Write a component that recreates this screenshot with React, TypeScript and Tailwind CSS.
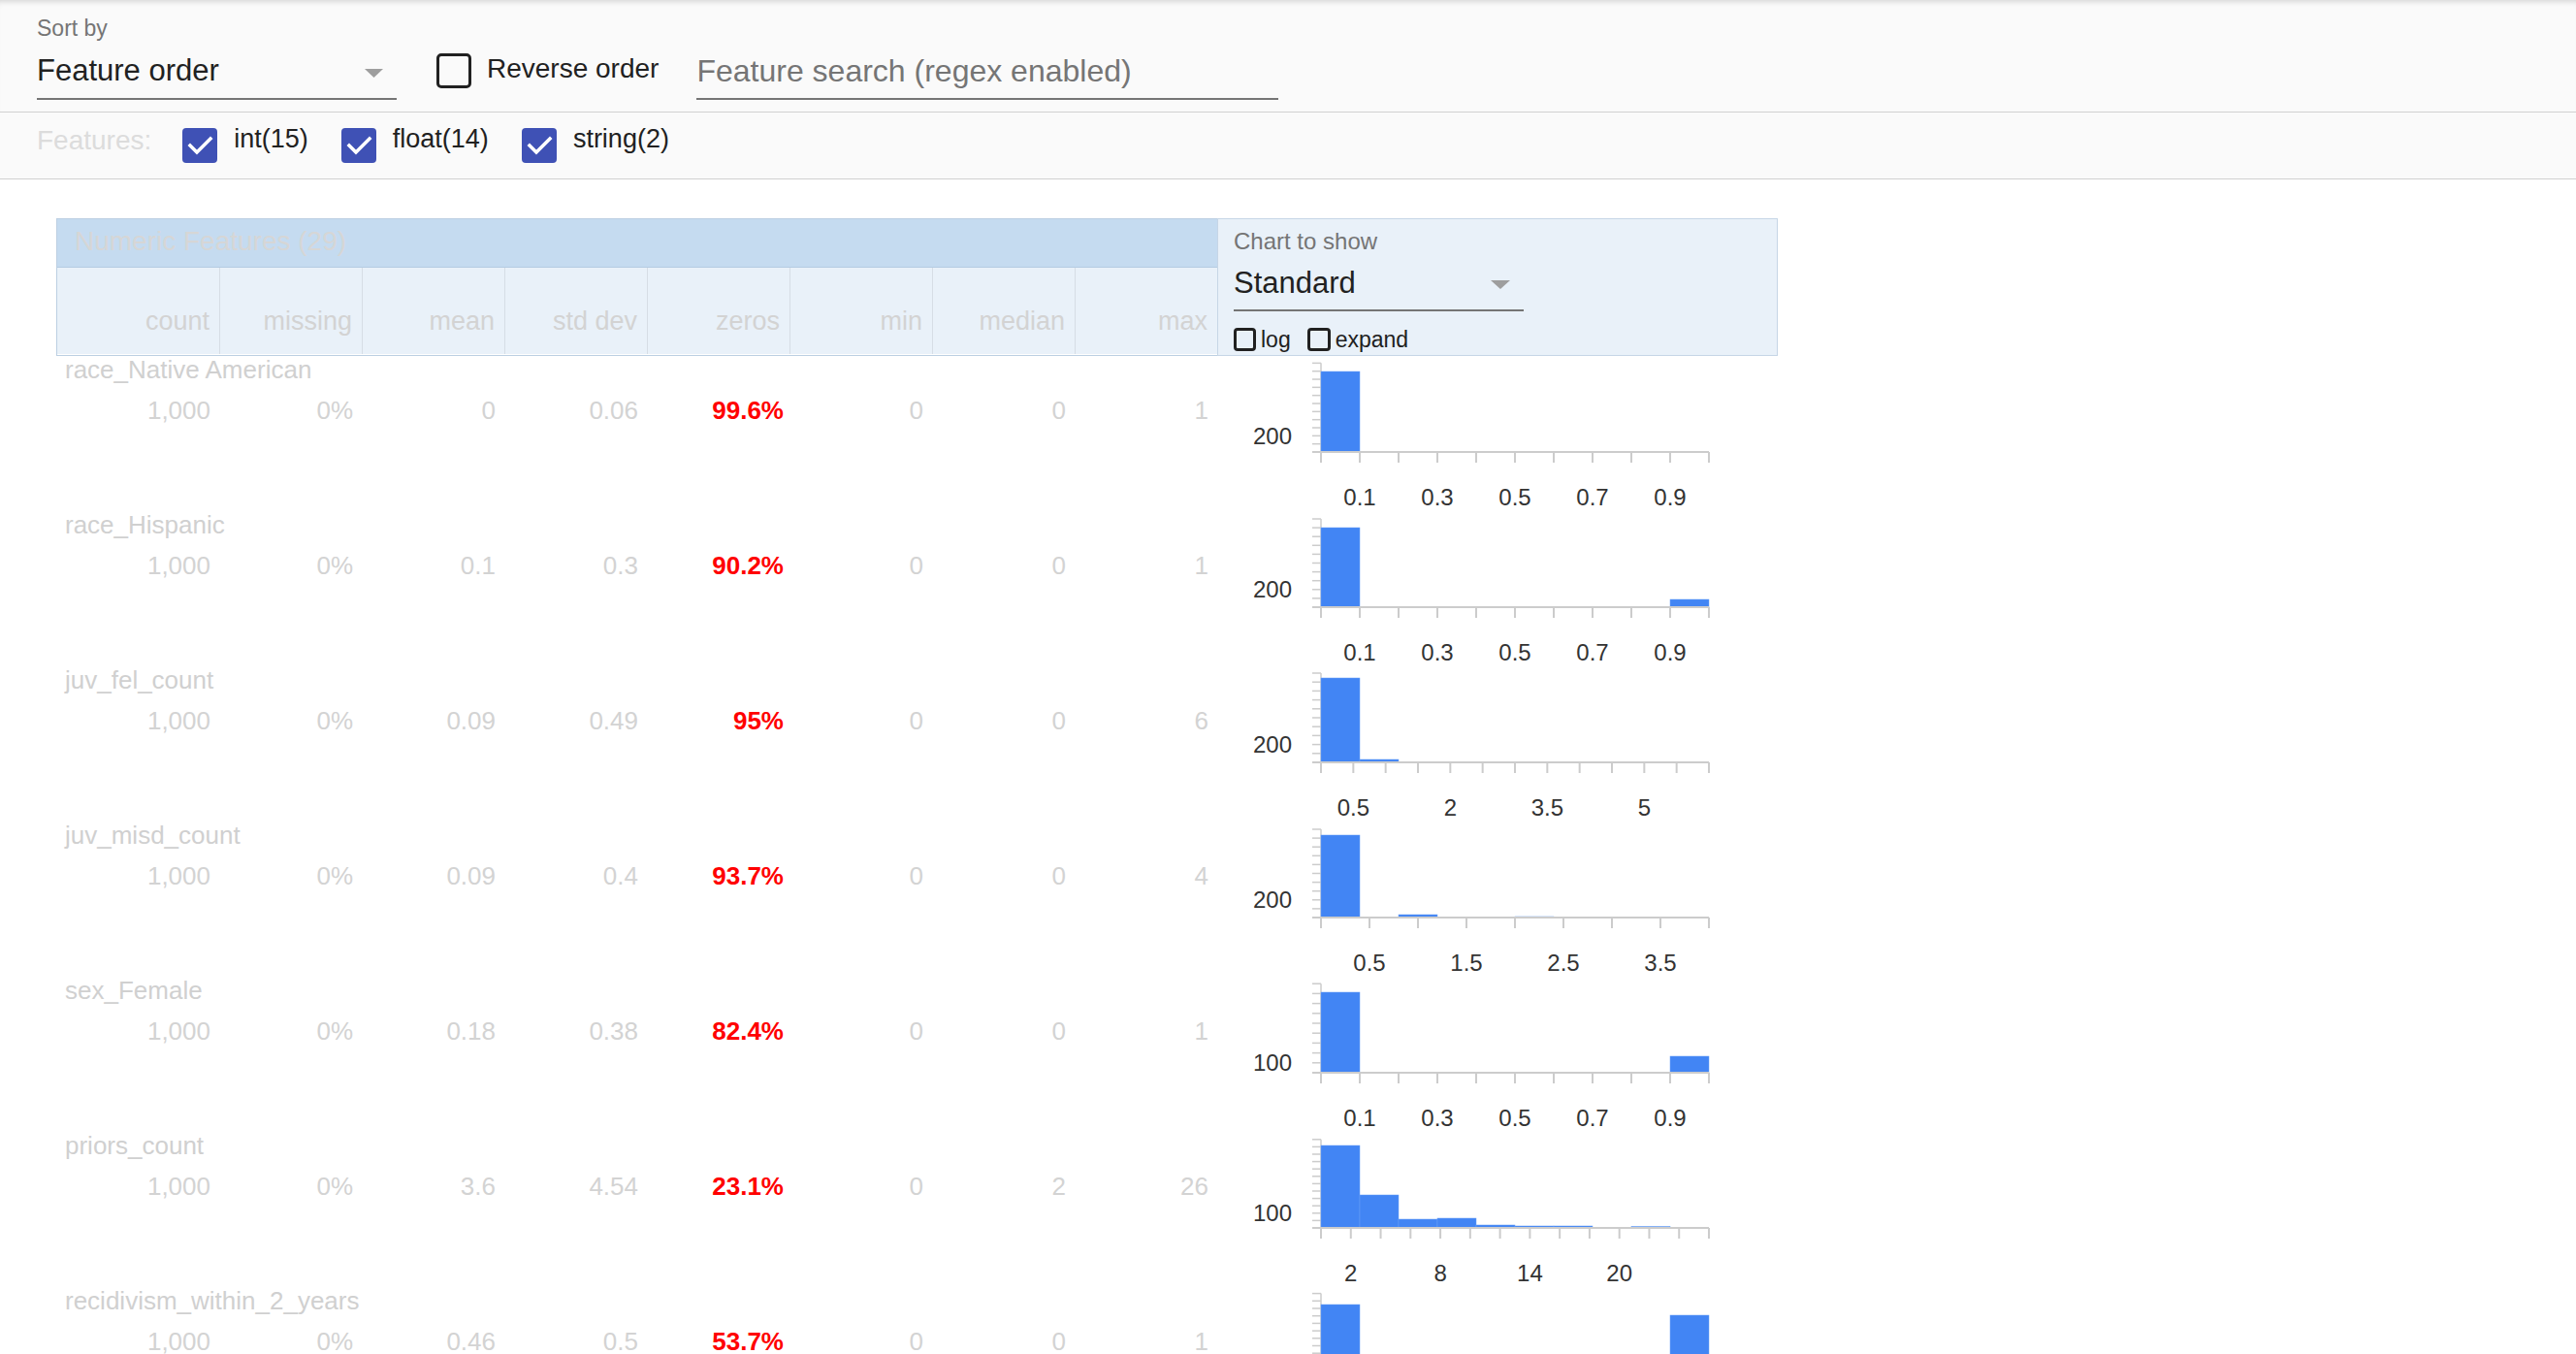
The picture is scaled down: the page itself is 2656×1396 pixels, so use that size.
const font = "font-['Liberation_Sans',Arial,sans-serif]";

type Chart = {
  n: number;
  s: number;
  yLabel: string;
  yk: number;
  bars: number[];
  xt: number;
  xl: [number, string][];
};

type Row = { name: string; vals: string[]; chart: Chart };

const tenths: [number, string][] = [
  [1, "0.1"],
  [3, "0.3"],
  [5, "0.5"],
  [7, "0.7"],
  [9, "0.9"],
];

const rows: Row[] = [
  {
    name: "race_Native American",
    vals: ["1,000", "0%", "0", "0.06", "99.6%", "0", "0", "1"],
    chart: { n: 11, s: 8.33, yLabel: "200", yk: 2, bars: [83, 0, 0, 0, 0, 0, 0, 0, 0, 0], xt: 10, xl: tenths },
  },
  {
    name: "race_Hispanic",
    vals: ["1,000", "0%", "0.1", "0.3", "90.2%", "0", "0", "1"],
    chart: { n: 10, s: 9.1, yLabel: "200", yk: 2, bars: [82, 0, 0, 0, 0, 0, 0, 0, 0, 8], xt: 10, xl: tenths },
  },
  {
    name: "juv_fel_count",
    vals: ["1,000", "0%", "0.09", "0.49", "95%", "0", "0", "6"],
    chart: {
      n: 10,
      s: 9.2,
      yLabel: "200",
      yk: 2,
      bars: [87, 3, 0, 0, 0, 0, 0, 0, 0, 0],
      xt: 12,
      xl: [
        [1, "0.5"],
        [4, "2"],
        [7, "3.5"],
        [10, "5"],
      ],
    },
  },
  {
    name: "juv_misd_count",
    vals: ["1,000", "0%", "0.09", "0.4", "93.7%", "0", "0", "4"],
    chart: {
      n: 10,
      s: 9.1,
      yLabel: "200",
      yk: 2,
      bars: [85, 0, 3, 0, 0, 1, 0, 0, 0, 0],
      xt: 8,
      xl: [
        [1, "0.5"],
        [3, "1.5"],
        [5, "2.5"],
        [7, "3.5"],
      ],
    },
  },
  {
    name: "sex_Female",
    vals: ["1,000", "0%", "0.18", "0.38", "82.4%", "0", "0", "1"],
    chart: { n: 9, s: 10.2, yLabel: "100", yk: 1, bars: [83, 0, 0, 0, 0, 0, 0, 0, 0, 17], xt: 10, xl: tenths },
  },
  {
    name: "priors_count",
    vals: ["1,000", "0%", "3.6", "4.54", "23.1%", "0", "2", "26"],
    chart: {
      n: 12,
      s: 7.6,
      yLabel: "100",
      yk: 2,
      bars: [85, 34, 9, 10, 3, 2, 2, 0, 1.5, 0],
      xt: 13,
      xl: [
        [1, "2"],
        [4, "8"],
        [7, "14"],
        [10, "20"],
      ],
    },
  },
  {
    name: "recidivism_within_2_years",
    vals: ["1,000", "0%", "0.46", "0.5", "53.7%", "0", "0", "1"],
    chart: { n: 12, s: 7.7, yLabel: "100", yk: 2, bars: [81, 0, 0, 0, 0, 0, 0, 0, 0, 70], xt: 10, xl: tenths },
  },
];

const headers = ["count", "missing", "mean", "std dev", "zeros", "min", "median", "max"];

const Check = () => (
  <svg width="30" height="30" viewBox="0 0 30 30" fill="none">
    <path d="M5 15 L12 22 L26 8" stroke="white" strokeWidth="3.5" strokeLinecap="square" />
  </svg>
);

function Histogram({ c }: { c: Chart }) {
  const ax = 82;
  const ay = 99;
  const w = 400;
  const top = ay - c.n * c.s;
  const step = w / c.xt;
  return (
    <svg width={500} height={160} className="block overflow-visible">
      {Array.from({ length: c.n + 1 }, (_, k) => (
        <line key={k} x1={73} x2={ax} y1={ay - k * c.s} y2={ay - k * c.s} stroke="#cccccc" strokeWidth={1.5} />
      ))}
      <line x1={ax} x2={ax} y1={top} y2={ay} stroke="#cccccc" strokeWidth={1.5} />
      {c.bars.map((h, i) =>
        h > 0 ? <rect key={i} x={ax + 40 * i} y={ay - h} width={40} height={h} fill="#4285f4" stroke="#6aa0f7" strokeWidth={0.5} /> : null
      )}
      <line x1={73} x2={ax + w} y1={ay} y2={ay} stroke="#cccccc" strokeWidth={2} />
      {Array.from({ length: c.xt + 1 }, (_, k) => (
        <line key={k} x1={ax + k * step} x2={ax + k * step} y1={ay} y2={ay + 11} stroke="#cccccc" strokeWidth={2} />
      ))}
      <text x={52} y={ay - c.yk * c.s} textAnchor="end" dominantBaseline="central" fontSize={24} fill="#333333">
        {c.yLabel}
      </text>
      {c.xl.map(([k, t]) => (
        <text key={t} x={ax + k * step} y={145} textAnchor="middle" dominantBaseline="central" fontSize={24} fill="#333333">
          {t}
        </text>
      ))}
    </svg>
  );
}

export default function App() {
  return (
    <div className={`${font} min-h-screen bg-white text-[#212121]`}>
      {/* Toolbar */}
      <div className="h-[116px] bg-[#fafafa] border-b border-[#d0d0d0] shadow-[inset_0_6px_6px_-5px_rgba(0,0,0,0.18)] flex items-start pl-[38px]">
        <div className="pt-[18px]">
          <div className="text-[23px] leading-none text-[#757575]">Sort by</div>
          <div className="relative mt-[16px] w-[371px] h-[46px] border-b-2 border-[#757575]">
            <div className="text-[31px] leading-none text-[#212121]">Feature order</div>
            <svg className="absolute right-[14px] top-[14px]" width="19" height="9" viewBox="0 0 19 9">
              <path d="M0 0 H19 L9.5 9 Z" fill="#9e9e9e" />
            </svg>
          </div>
        </div>
        <div className="ml-[41px] mt-[55px] w-[36px] h-[36px] border-[3px] border-[#212121] rounded-[5px]" />
        <div className="ml-[16px] mt-[57px] text-[28px] leading-none text-[#212121]">Reverse order</div>
        <div className="ml-[39px] mt-[55px] w-[600px] h-[48px] border-b-2 border-[#757575]">
          <input
            className="w-full bg-transparent outline-none text-[32px] leading-none placeholder:text-[#757575]"
            placeholder="Feature search (regex enabled)"
          />
        </div>
      </div>

      {/* Feature type filters */}
      <div className="h-[69px] bg-[#fafafa] border-b border-[#d0d0d0] flex items-start pl-[38px]">
        <div className="mt-[15px] text-[28px] leading-none text-[#dcdcdc]">Features:</div>
        {["int(15)", "float(14)", "string(2)"].map((t, i) => (
          <div key={t} className={`flex items-start ${i === 0 ? "ml-[32px]" : "ml-[34px]"}`}>
            <div className="mt-[16px] w-[36px] h-[36px] rounded-[4px] bg-[#3f51b5] flex items-center justify-center">
              <Check />
            </div>
            <div className="ml-[17px] mt-[14px] text-[27px] leading-none text-[#212121]">{t}</div>
          </div>
        ))}
      </div>

      {/* Table header */}
      <div className="flex ml-[58px] mt-[40px]">
        <div className="w-[1197px] h-[142px] border border-r-0 border-[#bccfe2]">
          <div className="h-[50px] bg-[#c5dbf0] border-b border-[#b4cbe2] pl-[18px] pt-[9px] text-[28px] leading-none text-[#d6d6d6]">
            Numeric Features (29)
          </div>
          <div className="grid grid-cols-[167px_repeat(7,147px)] h-[89px] bg-[#e9f1f9]">
            {headers.map((h, i) => (
              <div
                key={h}
                className={`flex items-end justify-end pr-[10px] pb-[20px] text-[27px] leading-none text-[#d3d3d3] ${
                  i === 0 ? "" : "border-l border-[#d6dde5]"
                }`}
              >
                {h}
              </div>
            ))}
          </div>
        </div>
        <div className="w-[578px] h-[142px] border border-[#c6d6e6] bg-[#e9f1f9] pl-[16px] pt-[11px]">
          <div className="text-[24px] leading-none text-[#757575]">Chart to show</div>
          <div className="relative mt-[15px] w-[299px] h-[45px] border-b-2 border-[#757575]">
            <div className="text-[31px] leading-none text-[#212121]">Standard</div>
            <svg className="absolute right-[14px] top-[13px]" width="20" height="9" viewBox="0 0 20 9">
              <path d="M0 0 H20 L10 9 Z" fill="#9e9e9e" />
            </svg>
          </div>
          <div className="flex items-center mt-[17px] text-[23px] leading-none text-[#212121]">
            <div className="w-[23px] h-[24px] border-[3px] border-[#212121] rounded-[4px]" />
            <span className="ml-[5px]">log</span>
            <div className="ml-[17px] w-[24px] h-[24px] border-[3px] border-[#212121] rounded-[4px]" />
            <span className="ml-[5px]">expand</span>
          </div>
        </div>
      </div>

      {/* Rows */}
      <div className="ml-[58px]">
        {rows.map((r) => (
          <div key={r.name} className="flex h-[160px]">
            <div className="w-[1197px]">
              <div className="mt-[1px] pl-[9px] text-[26px] leading-none text-[#d0d0d0]">{r.name}</div>
              <div className="grid grid-cols-[168px_repeat(7,147px)] mt-[16px]">
                {r.vals.map((v, i) => (
                  <div
                    key={i}
                    className={`text-right text-[26px] leading-none ${
                      i === 4 ? "font-bold text-[#ff0000] pr-[6px]" : "text-[#d3d3d3] pr-[9px]"
                    }`}
                  >
                    {v}
                  </div>
                ))}
              </div>
            </div>
            <div className="w-[578px] pl-[25px]">
              <Histogram c={r.chart} />
            </div>
          </div>
        ))}
      </div>
    </div>
  );
}
